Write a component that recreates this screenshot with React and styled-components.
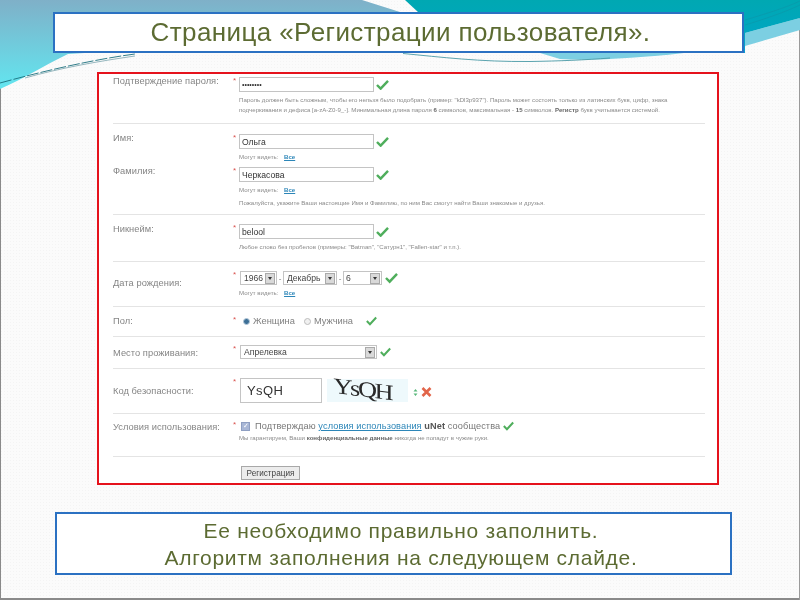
import React from "react";
import styled, { createGlobalStyle } from "styled-components";

const Global = createGlobalStyle`
  html, body { margin: 0; padding: 0; background: #fff; }
  * { box-sizing: border-box; }
`;

const Slide = styled.div`
  position: relative;
  width: 800px;
  height: 600px;
  overflow: hidden;
  padding-top: 12px;
  font-family: "Liberation Sans", Arial, sans-serif;
  background-color: #fbfbfb;
  background-image: radial-gradient(#f4f4f4 0.7px, transparent 0.8px);
  background-size: 3px 3px;
  box-shadow: inset 1px 0 0 #8a8a8a, inset -1px 0 0 #9a9a9a, inset 0 -2px 0 #8a8a8a;
`;

const Wave = styled.svg`
  position: absolute;
  left: 0;
  top: 0;
`;

const Banner = styled.div`
  position: relative;
  display: flex;
  flex-direction: column;
  align-items: center;
  justify-content: center;
  background: #fff;
  border: 2px solid #2b71c2;
  color: #5c6b32;
  filter: blur(0.3px);
`;

const TitleBox = styled(Banner)`
  width: 691px;
  height: 41px;
  margin-left: 53px;
  font-size: 26px;
  letter-spacing: 0.4px;
  padding-left: 4px;
`;

const NoteBox = styled(Banner)`
  width: 677px;
  height: 63px;
  margin: 27px 0 0 55px;
  padding-left: 15px;
  font-size: 21px;
  line-height: 27px;
  letter-spacing: 0.7px;
`;

const Frame = styled.div`
  position: relative;
  width: 622px;
  height: 413px;
  margin: 19px 0 0 97px;
  padding: 0 12px 0 14px;
  background: #fff;
  border: 2px solid #e5121c;
`;

const Blurred = styled.div`
  filter: blur(0.55px);
`;

const Section = styled.div`
  height: ${(p) => p.$h}px;
  padding-top: ${(p) => p.$top}px;
  border-bottom: ${(p) => (p.$last ? "none" : "1px solid #e4e4e4")};
`;

const Row = styled.div`
  display: grid;
  grid-template-columns: 120px 6px 1fr;
  margin-top: ${(p) => p.$mt || 0}px;
`;

const Label = styled.div`
  font-size: 9.3px;
  letter-spacing: 0.05px;
  line-height: 12px;
  color: #858585;
  white-space: nowrap;
  margin-top: ${(p) => p.$offset || 0}px;
`;

const Star = styled.span`
  color: #d9534f;
  font-size: 8px;
  line-height: 8px;
`;

const Line = styled.div`
  display: flex;
  align-items: center;
  gap: ${(p) => p.$gap || 0}px;
  padding-left: ${(p) => p.$pl || 0}px;
  white-space: nowrap;
`;

const TextInput = styled.div`
  display: flex;
  align-items: center;
  width: ${(p) => p.$w || 135}px;
  height: ${(p) => p.$h || 15}px;
  padding-left: ${(p) => p.$pad || 2}px;
  background: #fff;
  border: 1px solid #c4c4c4;
  color: ${(p) => p.$color || "#333"};
  font-size: ${(p) => p.$size || 8.6}px;
  letter-spacing: ${(p) => p.$track || 0}px;
  margin-right: ${(p) => p.$mr || 2}px;
`;

const Hint = styled.div`
  font-size: 6.1px;
  line-height: 10px;
  color: #8a8a8a;
  white-space: nowrap;
  margin-top: ${(p) => p.$mt || 0}px;
  & b { color: #666; }
`;

const Visible = styled.a`
  color: #2c86b8;
  text-decoration: underline;
  font-weight: bold;
  margin-left: 4px;
`;

const SelectBox = styled.div`
  display: flex;
  align-items: center;
  justify-content: space-between;
  width: ${(p) => p.$w}px;
  height: 14px;
  padding: 0 1px 0 ${(p) => p.$pad || 3}px;
  border: 1px solid #c4c4c4;
  background: #fff;
  color: #444;
  font-size: 8.6px;
`;

const SelectArrow = styled.span`
  display: flex;
  align-items: center;
  justify-content: center;
  width: 10px;
  height: 11px;
  background: #d9d9d9;
  border: 1px solid #aaa;
  &::after {
    content: "";
    border-left: 2px solid transparent;
    border-right: 2px solid transparent;
    border-top: 3px solid #333;
  }
`;

const Dash = styled.span`
  width: 6px;
  text-align: center;
  color: #777;
  font-size: 8px;
`;

const RadioDot = styled.span`
  width: 7px;
  height: 7px;
  border-radius: 50%;
  flex: none;
  background: ${(p) => (p.$on ? "#3c6f96" : "#f1f1f1")};
  border: 1px solid ${(p) => (p.$on ? "#b4c8d8" : "#bbb")};
`;

const OptionText = styled.span`
  font-size: 9.3px;
  color: #808080;
  margin-right: ${(p) => p.$mr || 0}px;
`;

const Tick = styled.span`
  display: flex;
  width: 9px;
  height: 9px;
  flex: none;
  align-items: center;
  justify-content: center;
  background: #a9b7d6;
  color: #fff;
  border: 1px solid #8f9fc2;
  font-size: 7px;
  margin-right: 5px;
`;

const TermsText = styled.span`
  font-size: 9.2px;
  letter-spacing: 0.1px;
  color: #777;
  & a { color: #2c86b8; text-decoration: underline; }
  & b { color: #555; }
`;

const Captcha = styled.div`
  display: flex;
  align-items: center;
  justify-content: center;
  width: 81px;
  height: 23px;
  margin: -1px 0 0 3px;
  background: #eef9fc;
  color: #2a2a2a;
  font-family: "Liberation Serif", serif;
  font-size: 22px;
  letter-spacing: -2px;
`;

const CaptchaWord = styled.span`
  display: block;
  transform: skewY(7deg) scaleX(1.2);
  padding-right: 8px;
`;

const Submit = styled.div`
  display: inline-flex;
  align-items: center;
  justify-content: center;
  width: 59px;
  height: 14px;
  margin: 9px 0 0 128px;
  background: #ececec;
  border: 1px solid #a8a8a8;
  color: #444;
  font-size: 8.2px;
`;

const CheckIcon = styled.svg`
  flex: none;
  margin-left: ${(p) => p.$ml || 0}px;
`;

const Check = ({ ml = 0, w = 13 }) => (
  <CheckIcon $ml={ml} width={w} height={w * 0.85} viewBox="0 0 14 12">
    <path d="M1 6.5 L5 10.5 L13 2" fill="none" stroke="#4fae5c" strokeWidth="2.6" />
  </CheckIcon>
);

const SpinIcon = styled.svg`
  flex: none;
  margin: 3px 3px 0 5px;
`;

const Arrow = () => (
  <SpinIcon width="5" height="9" viewBox="0 0 5 9">
    <path d="M2.5 1 L4.5 3.6 H0.5 Z M2.5 8 L4.5 5.4 H0.5 Z" fill="#58b87a" />
  </SpinIcon>
);

const CrossIcon = styled.svg`
  flex: none;
  margin-top: 3px;
`;

const Cross = () => (
  <CrossIcon width="11" height="10" viewBox="0 0 11 10">
    <path d="M1.5 1 L9.5 9 M9.5 1 L1.5 9" stroke="#e2654a" strokeWidth="2.6" />
  </CrossIcon>
);

const Field = ({ label, offset, children, mt }) => (
  <Row $mt={mt}>
    <Label $offset={offset}>{label}</Label>
    <Star>*</Star>
    <div>{children}</div>
  </Row>
);

const Select = ({ w, pad, value }) => (
  <SelectBox $w={w} $pad={pad}>
    <span>{value}</span>
    <SelectArrow />
  </SelectBox>
);

const Seen = () => (
  <Hint $mt={3}>
    Могут видеть: <Visible>Все</Visible>
  </Hint>
);

export default function App() {
  return (
    <Slide>
      <Global />
      <Wave width="800" height="90" viewBox="0 0 800 90">
        <defs>
          <linearGradient id="left" x1="0" y1="0" x2="0" y2="1">
            <stop offset="0" stopColor="#7fb0c8" />
            <stop offset="1" stopColor="#62e6f0" />
          </linearGradient>
          <linearGradient id="right" x1="0" y1="0" x2="0" y2="1">
            <stop offset="0" stopColor="#00a8b2" />
            <stop offset="0.6" stopColor="#00a6c0" />
            <stop offset="1" stopColor="#0a9dd2" />
          </linearGradient>
        </defs>
        <path d="M0 0 H362 L400 12 L300 40 L68 54 C45 65 25 78 0 89 Z" fill="url(#left)" />
        <path d="M745 33 L800 18 V30 L745 46 Z" fill="#7ccfe2" />
        <path d="M405 0 H800 V18 L745 33 V53 H400 V12 L418 12 Z" fill="url(#right)" />
        <path d="M745 20 C765 14 785 8 800 1" fill="none" stroke="#0c96a8" strokeWidth="0.6" />
        <path d="M745 25 C765 19 785 12 800 5" fill="none" stroke="#0c96a8" strokeWidth="0.6" />
        <path d="M540 53 H684 C640 58 590 61 560 59 Z" fill="#7ccfe2" />
        <path d="M403 53.5 C440 57 480 62 530 61.5 C560 61 585 60 610 58" fill="none" stroke="#4a9aa6" strokeWidth="0.9" />
        <path d="M0 83 C40 72 90 60 135 54" fill="none" stroke="#1b6f7d" strokeWidth="0.9" strokeDasharray="12 2" />
        <path d="M25 78 C60 68 100 61 135 56" fill="none" stroke="#6a9aa3" strokeWidth="0.7" />
      </Wave>

      <TitleBox>Страница «Регистрации пользователя».</TitleBox>

      <Frame>
        <Blurred>
          <Section $h={50} $top={3}>
            <Field label="Подтверждение пароля:" offset={-2}>
              <Line>
                <TextInput $size={7}>••••••••</TextInput>
                <Check />
              </Line>
              <Hint $mt={3}>
                Пароль должен быть сложным, чтобы его нельзя было подобрать (пример: "kDl3p937"). Пароль может состоять только из латинских букв, цифр, знака
              </Hint>
              <Hint>
                подчеркивания и дефиса [a-zA-Z0-9_-]. Минимальная длина пароля <b>6</b> символов, максимальная - <b>15</b> символов. <b>Регистр</b> букв учитывается системой.
              </Hint>
            </Field>
          </Section>

          <Section $h={91} $top={10}>
            <Field label="Имя:" offset={-2}>
              <Line>
                <TextInput>Ольга</TextInput>
                <Check />
              </Line>
              <Seen />
            </Field>
            <Field label="Фамилия:" offset={-2} mt={5}>
              <Line>
                <TextInput>Черкасова</TextInput>
                <Check />
              </Line>
              <Seen />
              <Hint $mt={3}>
                Пожалуйста, укажите Ваши настоящие Имя и Фамилию, по ним Вас смогут найти Ваши знакомые и друзья.
              </Hint>
            </Field>
          </Section>

          <Section $h={47} $top={9}>
            <Field label="Никнейм:" offset={-1}>
              <Line>
                <TextInput>belool</TextInput>
                <Check />
              </Line>
              <Hint $mt={3}>
                Любое слово без пробелов (примеры: "Batman", "Сатурн1", "Fallen-star" и т.п.).
              </Hint>
            </Field>
          </Section>

          <Section $h={45} $top={9}>
            <Field label="Дата рождения:" offset={6}>
              <Line $pl={1}>
                <Select w={37} value="1966" />
                <Dash>-</Dash>
                <Select w={54} value="Декабрь" />
                <Dash>-</Dash>
                <Select w={39} pad={2} value="6" />
                <Check ml={3} />
              </Line>
              <Seen />
            </Field>
          </Section>

          <Section $h={30} $top={9}>
            <Field label="Пол:" offset={-1}>
              <Line $pl={4} $gap={3}>
                <RadioDot $on />
                <OptionText $mr={6}>Женщина</OptionText>
                <RadioDot />
                <OptionText $mr={10}>Мужчина</OptionText>
                <Check w={11} />
              </Line>
            </Field>
          </Section>

          <Section $h={32} $top={8}>
            <Field label="Место проживания:" offset={2}>
              <Line $pl={1}>
                <Select w={137} value="Апрелевка" />
                <Check ml={3} w={11} />
              </Line>
            </Field>
          </Section>

          <Section $h={45} $top={9}>
            <Field label="Код безопасности:" offset={7}>
              <Line $pl={1}>
                <TextInput $w={82} $h={25} $size={13} $pad={6} $track={0.4} $color="#333" $mr={2}>YsQH</TextInput>
                <Captcha>
                  <CaptchaWord>YsQH</CaptchaWord>
                </Captcha>
                <Arrow />
                <Cross />
              </Line>
            </Field>
          </Section>

          <Section $h={43} $top={7}>
            <Field label="Условия использования:">
              <Line $pl={2}>
                <Tick>✓</Tick>
                <TermsText>
                  Подтверждаю <a>условия использования</a> <b>uNet</b> сообщества
                </TermsText>
                <Check ml={3} w={11} />
              </Line>
              <Hint $mt={2}>
                Мы гарантируем, Ваши <b>конфиденциальные данные</b> никогда не попадут в чужие руки.
              </Hint>
            </Field>
          </Section>

          <Section $h={28} $top={0} $last>
            <Submit>Регистрация</Submit>
          </Section>
        </Blurred>
      </Frame>

      <NoteBox>
        <div>Ее необходимо правильно заполнить.</div>
        <div>Алгоритм заполнения на следующем слайде.</div>
      </NoteBox>
    </Slide>
  );
}
